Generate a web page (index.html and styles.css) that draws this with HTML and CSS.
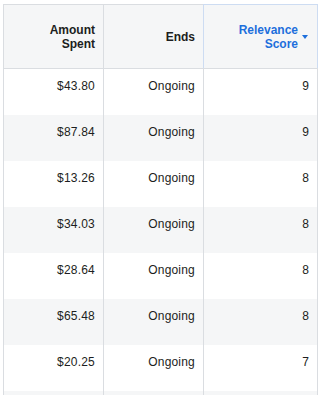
FILE: index.html
```html
<!DOCTYPE html>
<html lang="en">
<head>
<meta charset="utf-8">
<link rel="stylesheet" href="styles.css">
</head>
<body>
<div class="table">
  <div class="row head">
    <div class="cell c1"><span class="label">Amount<br>Spent</span></div>
    <div class="cell c2"><span class="label">Ends</span></div>
    <div class="cell c3 sorted"><span class="label">Relevance<br>Score</span><span class="caret"></span></div>
  </div>
  <div class="row"><div class="cell c1">$43.80</div><div class="cell c2">Ongoing</div><div class="cell c3">9</div></div>
  <div class="row alt"><div class="cell c1">$87.84</div><div class="cell c2">Ongoing</div><div class="cell c3">9</div></div>
  <div class="row"><div class="cell c1">$13.26</div><div class="cell c2">Ongoing</div><div class="cell c3">8</div></div>
  <div class="row alt"><div class="cell c1">$34.03</div><div class="cell c2">Ongoing</div><div class="cell c3">8</div></div>
  <div class="row"><div class="cell c1">$28.64</div><div class="cell c2">Ongoing</div><div class="cell c3">8</div></div>
  <div class="row alt"><div class="cell c1">$65.48</div><div class="cell c2">Ongoing</div><div class="cell c3">8</div></div>
  <div class="row"><div class="cell c1">$20.25</div><div class="cell c2">Ongoing</div><div class="cell c3">7</div></div>
  <div class="row alt"><div class="cell c1"></div><div class="cell c2"></div><div class="cell c3"></div></div>
</div>
</body>
</html>
```

FILE: styles.css
```css
html, body {
  margin: 0;
  padding: 0;
  background: #ffffff;
  overflow: hidden;
}

body {
  font-family: "Liberation Sans", Arial, sans-serif;
  font-size: 12px;
  color: #1c1e21;
}

.table {
  margin: 4px 0 0 3px;
  width: 315px;
}

.row {
  display: flex;
  height: 46px;
  background: #ffffff;
}

.row.alt {
  background: #f5f6f7;
}

.cell {
  box-sizing: border-box;
  border-left: 1px solid #dadde1;
  padding: 9px 8px 0 0;
  line-height: 16px;
  text-align: right;
  letter-spacing: 0.2px;
}

.c1, .c2 {
  width: 100px;
}

.c3 {
  width: 115px;
  border-right: 1px solid #dadde1;
}

.row.head {
  height: 65px;
  background: #f5f6f7;
  border-top: 1px solid #dadde1;
  border-bottom: 1px solid #dadde1;
  box-sizing: border-box;
}

.head .cell {
  display: flex;
  align-items: center;
  justify-content: flex-end;
  padding: 0 8px 0 0;
  font-weight: bold;
  line-height: 14px;
  letter-spacing: 0;
}

.head .sorted {
  color: #1d6fdc;
  padding-right: 9px;
  border-left-color: #cddcf2;
  border-right-color: #cddcf2;
  box-shadow: 0 -1px 0 #cddcf2;
}

.caret {
  width: 0;
  height: 0;
  margin-left: 4px;
  border-left: 3.5px solid transparent;
  border-right: 3.5px solid transparent;
  border-top: 4px solid #1d6fdc;
}
```
